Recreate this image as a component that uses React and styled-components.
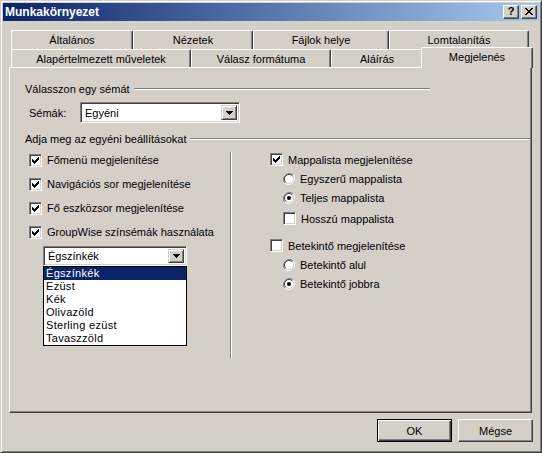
import React from 'react';
import styled, { createGlobalStyle } from 'styled-components';

const GlobalStyle = createGlobalStyle`
  html, body {
    margin: 0;
    padding: 0;
    background: #d4d0c8;
  }
  body {
    font-family: "Liberation Sans", Arial, sans-serif;
    font-size: 11px;
    color: #000;
  }
`;

const rowOneTabs = [
  { label: 'Általános', width: 122 },
  { label: 'Nézetek', width: 120 },
  { label: 'Fájlok helye', width: 136 },
  { label: 'Lomtalanítás', width: 140 },
];

const rowTwoTabs = [
  { label: 'Alapértelmezett műveletek', width: 180 },
  { label: 'Válasz formátuma', width: 140 },
  { label: 'Aláírás', width: 92 },
  { label: 'Megjelenés', width: 108, active: true },
];

const leftOptions = [
  'Főmenü megjelenítése',
  'Navigációs sor megjelenítése',
  'Fő eszközsor megjelenítése',
  'GroupWise színsémák használata',
];

const colorSchemes = ['Égszínkék', 'Ezüst', 'Kék', 'Olivazöld', 'Sterling ezüst', 'Tavaszzöld'];

export default function App() {
  return (
    <>
      <GlobalStyle />
      <Window>
        <TitleBar>
          <Title>Munkakörnyezet</Title>
          <TitleButtons>
            <CaptionButton>?</CaptionButton>
            <CaptionButton>
              <svg width="8" height="7" viewBox="0 0 8 7" shapeRendering="crispEdges">
                <path d="M0 0h2v1H0zM6 0h2v1H6zM1 1h2v1H1zM5 1h2v1H5zM2 2h4v1H2zM3 3h2v1H3zM2 4h4v1H2zM1 5h2v1H1zM5 5h2v1H5zM0 6h2v1H0zM6 6h2v1H6z" fill="#000" />
              </svg>
            </CaptionButton>
          </TitleButtons>
        </TitleBar>

        <Tabs>
          <TabRow>
            {rowOneTabs.map((t) => (
              <Tab key={t.label} $width={t.width}>{t.label}</Tab>
            ))}
          </TabRow>
          <TabRow>
            {rowTwoTabs.map((t) => (
              <Tab key={t.label} $width={t.width} $active={t.active} $low>
                {t.label}
              </Tab>
            ))}
          </TabRow>
        </Tabs>

        <Panel>
          <GroupHeader $width={405}>
            <span>Válasszon egy sémát</span>
            <EtchedLine />
          </GroupHeader>

          <SchemeRow>
            <SchemeLabel>Sémák:</SchemeLabel>
            <Combo $width={160} $height={21}>
              <ComboText>Egyéni</ComboText>
              <DropButton>
                <Arrow />
              </DropButton>
            </Combo>
          </SchemeRow>

          <GroupHeader $width={505} $gap={9}>
            <span>Adja meg az egyéni beállításokat</span>
            <EtchedLine />
          </GroupHeader>

          <Columns>
            <LeftColumn>
              {leftOptions.map((o) => (
                <OptionRow key={o} $height={24}>
                  <CheckBox checked />
                  <OptionLabel>{o}</OptionLabel>
                </OptionRow>
              ))}
              <ColorCombo>
                <Combo $width={144} $height={20}>
                  <ComboText>Égszínkék</ComboText>
                  <DropButton>
                    <Arrow />
                  </DropButton>
                </Combo>
                <DropList>
                  {colorSchemes.map((c, i) => (
                    <DropItem key={c} $selected={i === 0}>{c}</DropItem>
                  ))}
                </DropList>
              </ColorCombo>
            </LeftColumn>

            <Separator />

            <RightColumn>
              <OptionRow>
                <CheckBox checked />
                <OptionLabel>Mappalista megjelenítése</OptionLabel>
              </OptionRow>
              <OptionRow $indent={13}>
                <Radio />
                <OptionLabel>Egyszerű mappalista</OptionLabel>
              </OptionRow>
              <OptionRow $indent={13}>
                <Radio checked />
                <OptionLabel>Teljes mappalista</OptionLabel>
              </OptionRow>
              <OptionRow $indent={13} $top={2}>
                <CheckBox />
                <OptionLabel>Hosszú mappalista</OptionLabel>
              </OptionRow>
              <OptionRow $top={8}>
                <CheckBox />
                <OptionLabel>Betekintő megjelenítése</OptionLabel>
              </OptionRow>
              <OptionRow $indent={13}>
                <Radio />
                <OptionLabel>Betekintő alul</OptionLabel>
              </OptionRow>
              <OptionRow $indent={13}>
                <Radio checked />
                <OptionLabel>Betekintő jobbra</OptionLabel>
              </OptionRow>
            </RightColumn>
          </Columns>
        </Panel>

        <ButtonRow>
          <PushButton $default>OK</PushButton>
          <PushButton>Mégse</PushButton>
        </ButtonRow>
      </Window>
    </>
  );
}

function CheckBox({ checked }) {
  return (
    <Box>
      {checked && (
        <svg width="7" height="7" viewBox="0 0 7 7" shapeRendering="crispEdges">
          <path d="M6 0h1v3H6zM5 1h1v3H5zM4 2h1v3H4zM3 3h1v3H3zM2 4h1v3H2zM1 3h1v3H1zM0 2h1v3H0z" fill="#000" />
        </svg>
      )}
    </Box>
  );
}

function Radio({ checked }) {
  return (
    <RadioWrap>
      <svg width="12" height="12" viewBox="0 0 12 12">
        <path d="M10.2 1.8 A6 6 0 0 0 1.8 10.2" fill="none" stroke="#808080" strokeWidth="1" />
        <path d="M1.8 10.2 A6 6 0 0 0 10.2 1.8" fill="none" stroke="#ffffff" strokeWidth="1" />
        <circle cx="6" cy="6" r="4.5" fill="#fff" />
        <path d="M9.2 2.8 A4.5 4.5 0 0 0 2.8 9.2" fill="none" stroke="#404040" strokeWidth="1" />
        <path d="M2.8 9.2 A4.5 4.5 0 0 0 9.2 2.8" fill="none" stroke="#d4d0c8" strokeWidth="1" />
        {checked && <circle cx="6" cy="6" r="2" fill="#000" />}
      </svg>
    </RadioWrap>
  );
}

function Arrow() {
  return (
    <svg width="7" height="4" viewBox="0 0 7 4" shapeRendering="crispEdges">
      <path d="M0 0h7v1H0zM1 1h5v1H1zM2 2h3v1H2zM3 3h1v1H3z" fill="#000" />
    </svg>
  );
}

const Window = styled.div`
  width: 542px;
  height: 453px;
  box-sizing: border-box;
  background: #d4d0c8;
  border: 1px solid;
  border-color: #d4d0c8 #404040 #404040 #d4d0c8;
  box-shadow: inset 1px 1px #ffffff, inset -1px -1px #808080;
  padding: 2px;
  display: flex;
  flex-direction: column;
`;

const TitleBar = styled.div`
  height: 18px;
  display: flex;
  align-items: center;
  justify-content: space-between;
  padding: 0 2px 0 2px;
  background: linear-gradient(to right, #0a246a, #a6caf0);
`;

const Title = styled.div`
  color: #fff;
  font-weight: bold;
  font-size: 12px;
  line-height: 18px;
`;

const TitleButtons = styled.div`
  display: flex;
  gap: 2px;
`;

const CaptionButton = styled.div`
  width: 16px;
  height: 14px;
  box-sizing: border-box;
  background: #d4d0c8;
  border: 1px solid;
  border-color: #ffffff #404040 #404040 #ffffff;
  box-shadow: inset -1px -1px #808080;
  display: flex;
  align-items: center;
  justify-content: center;
  font-weight: bold;
  font-size: 11px;
  line-height: 1;
  padding-bottom: 1px;
`;

const Tabs = styled.div`
  margin: 9px 0 0 8px;
  display: flex;
  flex-direction: column;
`;

const TabRow = styled.div`
  display: flex;
  position: relative;
  z-index: 1;
`;

const Tab = styled.div`
  box-sizing: border-box;
  width: ${(p) => p.$width + (p.$active ? 4 : 0)}px;
  height: ${(p) => (p.$active ? 21 : p.$low ? 18 : 19)}px;
  margin: ${(p) => (p.$active ? '-2px -2px -1px' : '0')};
  display: flex;
  align-items: center;
  justify-content: center;
  background: #d4d0c8;
  border-top: 1px solid #ffffff;
  border-left: 1px solid #ffffff;
  border-right: 1px solid #404040;
  box-shadow: inset -1px 0 #808080;
  border-radius: 2px 2px 0 0;
  padding-bottom: ${(p) => (p.$active ? 2 : 0)}px;
  white-space: nowrap;
  position: relative;
  z-index: ${(p) => (p.$active ? 2 : 1)};
`;

const Panel = styled.div`
  margin-left: 6px;
  width: 523px;
  height: 346px;
  box-sizing: border-box;
  border-top: 1px solid #ffffff;
  border-left: 1px solid #ffffff;
  border-right: 1px solid #404040;
  border-bottom: 1px solid #404040;
  box-shadow: inset -1px -1px #808080;
  padding: 14px 0 0 15px;
  display: flex;
  flex-direction: column;
`;

const GroupHeader = styled.div`
  width: ${(p) => p.$width}px;
  height: 14px;
  margin-top: ${(p) => p.$gap || 0}px;
  display: flex;
  align-items: center;
  white-space: nowrap;
`;

const EtchedLine = styled.div`
  flex: 1;
  height: 0;
  margin-left: 4px;
  border-top: 1px solid #808080;
  border-bottom: 1px solid #ffffff;
`;

const SchemeRow = styled.div`
  display: flex;
  align-items: center;
  margin-top: 6px;
  padding-left: 4px;
`;

const SchemeLabel = styled.div`
  width: 51px;
`;

const Combo = styled.div`
  width: ${(p) => p.$width}px;
  height: ${(p) => p.$height}px;
  box-sizing: border-box;
  background: #fff;
  border: 1px solid;
  border-color: #808080 #ffffff #ffffff #808080;
  box-shadow: inset 1px 1px #404040, inset -1px -1px #d4d0c8;
  padding: 2px;
  display: flex;
  align-items: stretch;
`;

const ComboText = styled.div`
  flex: 1;
  display: flex;
  align-items: center;
  padding-left: 2px;
`;

const DropButton = styled.div`
  width: 16px;
  box-sizing: border-box;
  background: #d4d0c8;
  border: 1px solid;
  border-color: #d4d0c8 #404040 #404040 #d4d0c8;
  box-shadow: inset 1px 1px #ffffff, inset -1px -1px #808080;
  display: flex;
  align-items: center;
  justify-content: center;
`;

const Columns = styled.div`
  display: flex;
  margin-top: 2px;
  padding-left: 4px;
`;

const LeftColumn = styled.div`
  width: 201px;
  display: flex;
  flex-direction: column;
`;

const RightColumn = styled.div`
  margin-left: 38px;
  padding-top: 2px;
  display: flex;
  flex-direction: column;
`;

const Separator = styled.div`
  width: 0;
  height: 206px;
  margin-top: 4px;
  border-left: 1px solid #808080;
  border-right: 1px solid #ffffff;
`;

const OptionRow = styled.div`
  height: ${(p) => p.$height || 19}px;
  margin-top: ${(p) => p.$top || 0}px;
  padding-left: ${(p) => p.$indent || 0}px;
  display: flex;
  align-items: center;
  white-space: nowrap;
`;

const Box = styled.div`
  width: 13px;
  height: 13px;
  box-sizing: border-box;
  background: #fff;
  border: 1px solid;
  border-color: #808080 #ffffff #ffffff #808080;
  box-shadow: inset 1px 1px #404040, inset -1px -1px #d4d0c8;
  display: flex;
  align-items: center;
  justify-content: center;
  flex-shrink: 0;
`;

const RadioWrap = styled.div`
  width: 12px;
  height: 12px;
  display: flex;
  flex-shrink: 0;
`;

const OptionLabel = styled.span`
  margin-left: 5px;
`;

const ColorCombo = styled.div`
  position: relative;
  margin: 2px 0 0 14px;
  width: 144px;
`;

const DropList = styled.div`
  position: absolute;
  top: 100%;
  left: 0;
  width: 144px;
  box-sizing: border-box;
  background: #fff;
  border: 1px solid #000;
  z-index: 5;
`;

const DropItem = styled.div`
  height: 13px;
  line-height: 13px;
  padding-left: 2px;
  letter-spacing: 0.3px;
  background: ${(p) => (p.$selected ? '#0a246a' : '#fff')};
  color: ${(p) => (p.$selected ? '#fff' : '#000')};
`;

const ButtonRow = styled.div`
  display: flex;
  justify-content: flex-end;
  gap: 6px;
  margin-top: 6px;
  padding-right: 6px;
`;

const PushButton = styled.div`
  width: 75px;
  height: 23px;
  box-sizing: border-box;
  display: flex;
  align-items: center;
  justify-content: center;
  background: #d4d0c8;
  border: 1px solid;
  border-color: ${(p) => (p.$default ? '#000' : '#ffffff #404040 #404040 #ffffff')};
  box-shadow: ${(p) =>
    p.$default
      ? 'inset 1px 1px #ffffff, inset -1px -1px #404040, inset -2px -2px #808080'
      : 'inset -1px -1px #808080'};
`;
